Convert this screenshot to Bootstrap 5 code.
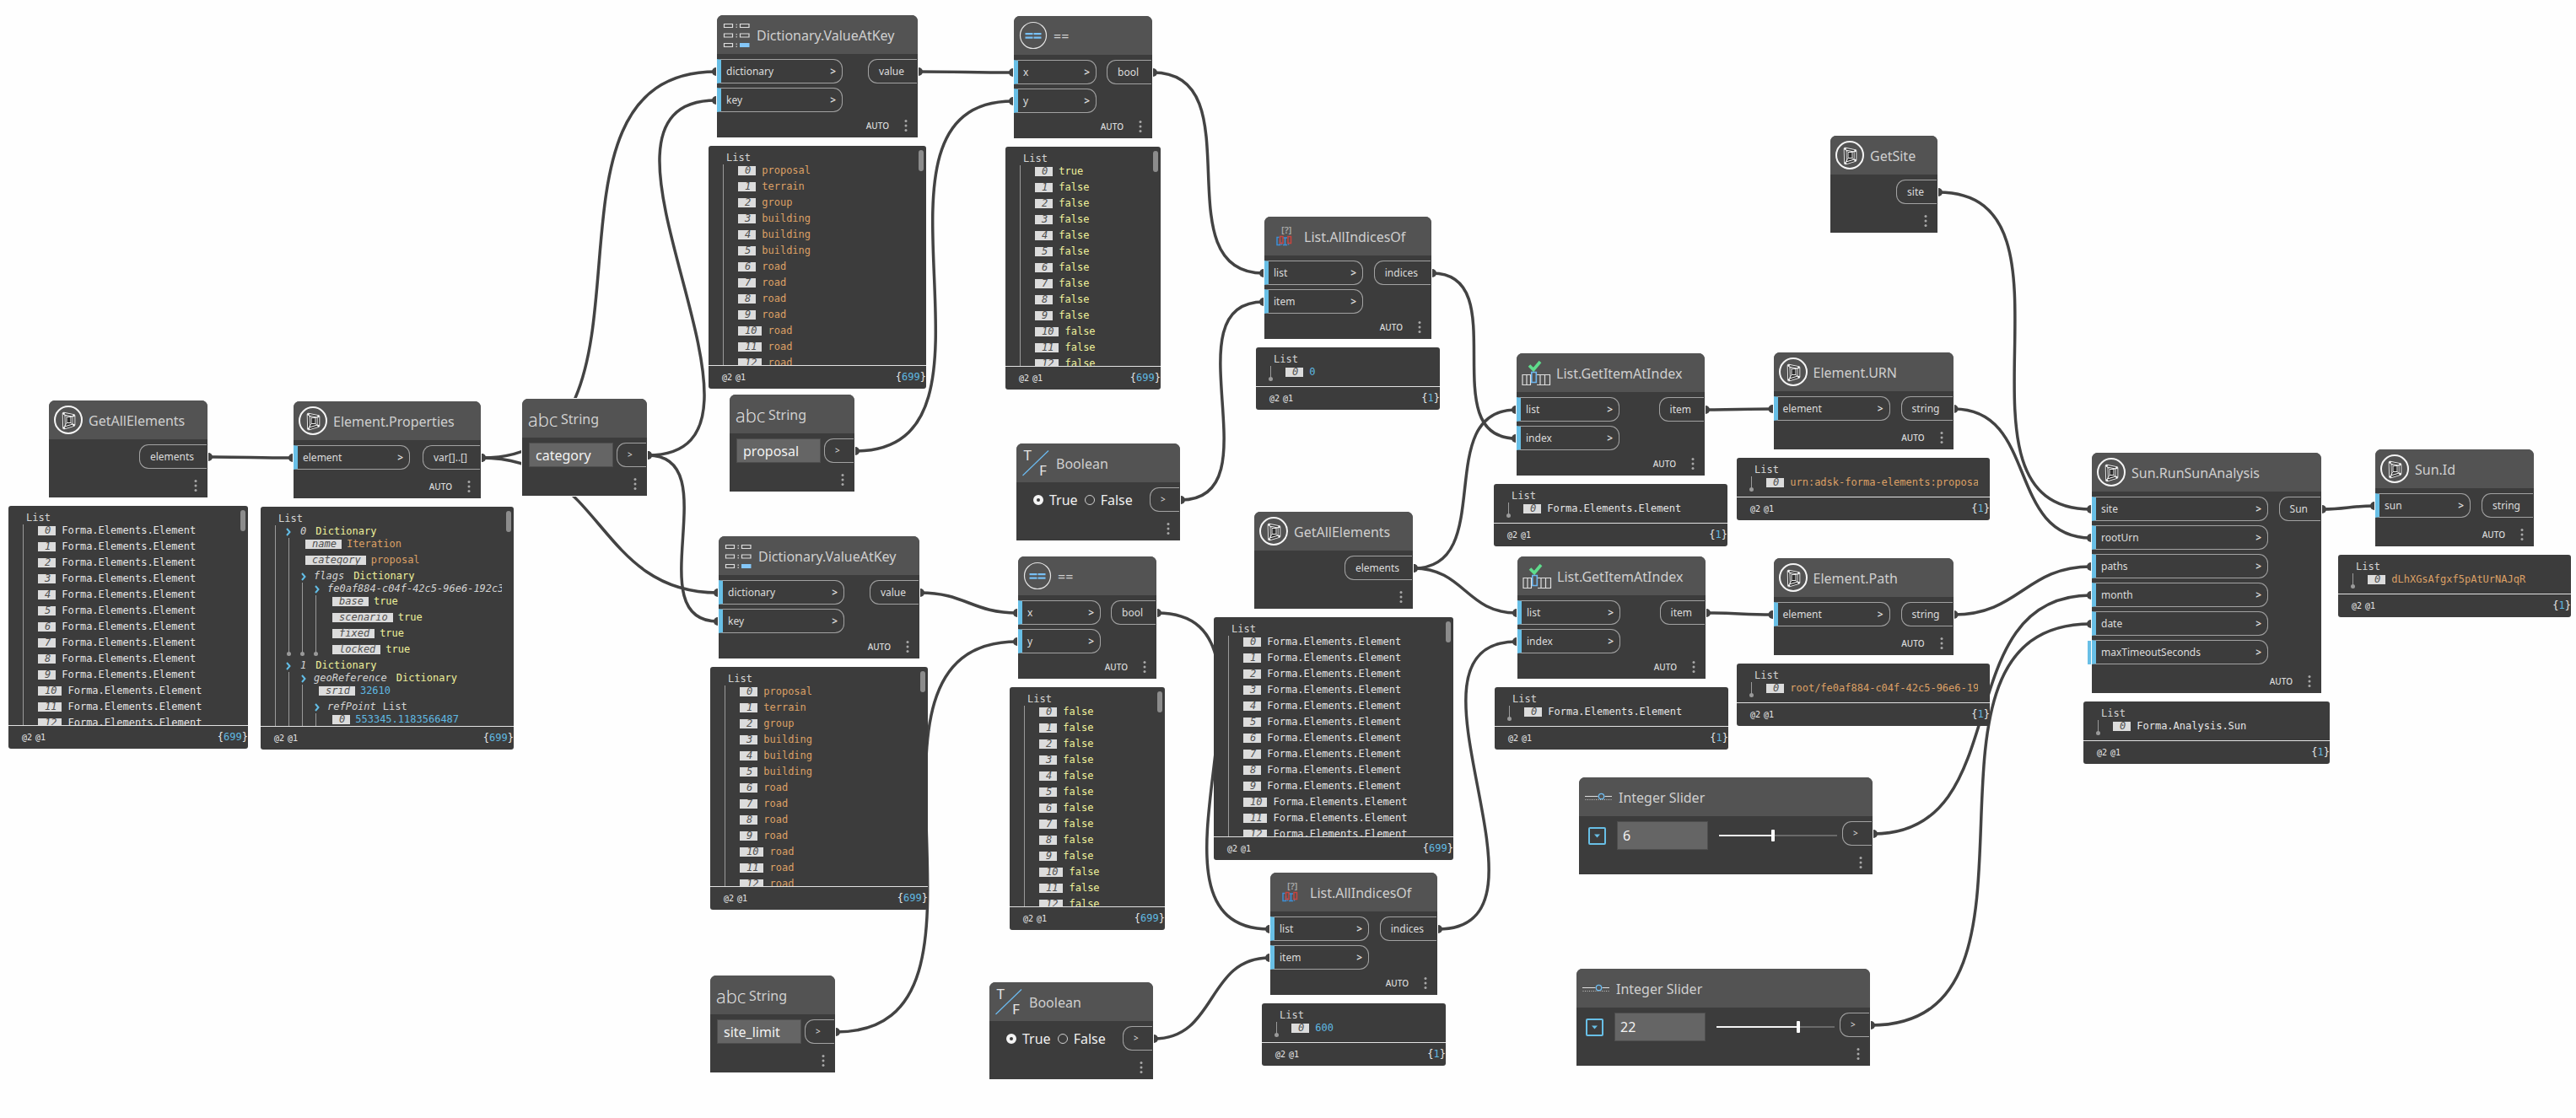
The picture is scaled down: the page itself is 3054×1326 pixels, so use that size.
<!DOCTYPE html>
<html lang="en">
<head>
<meta charset="utf-8">
<meta name="viewport" content="width=device-width, initial-scale=1">
<title>Sun analysis graph</title>
<link href="https://cdn.jsdelivr.net/npm/bootstrap@5.3.0/dist/css/bootstrap.min.css" rel="stylesheet">
<style>
  body { background: #fefefe; font-family: "Noto Sans", "Open Sans", sans-serif; }
  .graph { min-height: 100vh; overflow: hidden; }
  .wires { fill: none; stroke: #434343; stroke-width: 3.5; }
  .wires circle { fill: #434343; stroke: none; }

  /* a node and the preview bubble that hangs under it */
  .unit { position: absolute; display: flex; flex-direction: column; align-items: center; gap: 10px; }
  .node { position: relative; width: 148px; min-height: 115px; background: #3c3c3c; color: #dcdcdc;
          border-radius: 7px 7px 0 0; box-shadow: 0 0 0 1px #fefefe; display: flex; flex-direction: column; }
  .node-head { height: 46px; background: #535353; border-radius: 7px 7px 0 0; padding-top: 1px; }
  .node-head h2 { font-size: 16px; line-height: 24px; font-weight: 400; margin: 0; color: #cfcfcf; white-space: nowrap; }
  .node-head svg { width: 47px; height: 45px; flex: none; }
  .abc { width: 46px; padding-left: 7px; font: 300 22px/24px "Open Sans", "Noto Sans", sans-serif; color: #e6e6e6; }
  .ports { padding-top: 6px; }
  .stack { display: flex; flex-direction: column; gap: 5px; }
  .port { height: 29px; font-size: 12px; line-height: 27px; border: 1px solid #a2a2a2; white-space: nowrap; }
  .port-in { width: var(--in, 138px); border-left: 5px solid #68bfe6; border-radius: 0 11px 11px 0; padding: 0 7px 0 6px; }
  .port-out { border-right: 0; border-radius: 11px 0 0 11px; padding: 0 15px 0 12px; margin-right: 1px; }
  .port-bare { width: 35px; padding: 0 0 0 12px; font-size: 10px; }
  .port-in::after { content: ">"; font-weight: 600; }
  .spare::before { content: ""; position: absolute; left: -5px; width: 4px; height: 28px; background: #68bfe6; }
  .node-foot { height: 28px; padding-right: 8px; gap: 14px; font-size: 10px; font-weight: 500; }
  .kebab { border: 0; background: none; padding: 0; width: 12px; height: 18px; line-height: 0; }

  .k-list { width: 188px; }  .k-props { width: 222px; }
  .k-dict { width: 238px; --in: 149px; }  .k-eq { width: 164px; --in: 98px; }
  .k-all { width: 198px; --in: 117px; }   .k-item { width: 223px; --in: 122px; }
  .k-dict, .k-eq, .k-all, .k-item { min-height: 145px; }
  .k-elem { width: 213px; }               .k-bool { width: 194px; }
  .k-slide { width: 348px; }              .k-site { width: 127px; }
  .k-run { width: 272px; --in: 209px; min-height: 285px; }
  .k-id { width: 188px; --in: 113px; }

  .field { height: 29px; width: 100px; background: #656565; border: 1px solid #4e4e4e; color: #f2f2f2; font-size: 16px; line-height: 24px; padding: 0 7px; }
  .field-num { width: 108px; height: 34px; padding: 0 6px; }
  .pick { appearance: none; width: 12px; height: 12px; margin: 0; border: 1px solid #d0d0d0; border-radius: 50%; }
  .pick:checked { border: 4px solid #f4f4f4; }
  .choice { font-size: 16px; line-height: 24px; color: #f0f0f0; gap: 7px; }
  .slide-row { padding-left: 11px; gap: 13px; }
  .drop { width: 21px; height: 21px; border: 2px solid #68bfe6; border-radius: 2px; background: none; padding: 0; line-height: 0; }
  .track { appearance: none; width: 140px; height: 14px; margin: 0; background: linear-gradient(90deg, #f4f4f4 var(--fill), #6a6a6a var(--fill)) center / 100% 2px no-repeat; }
  .track::-webkit-slider-thumb { appearance: none; width: 4px; height: 14px; background: #fff; border-radius: 1px; }

  .preview { position: relative; width: 100%; background: #3c3c3c; color: #e6e6e6; border-radius: 3px;
             font: 12px/15px "DejaVu Sans Mono", "Liberation Mono", monospace; }
  .tree-box { height: 46px; overflow: hidden; margin-right: 14px; padding: 7px 0 0 17px; white-space: nowrap; }
  .tall .tree-box { height: 260px; }
  .tree-box p { margin: 0 0 0 4px; line-height: 15px; color: #d4d4d4; }
  .tree-box ul { list-style: none; margin: 0; padding: 0; border-left: 1px solid #9a9a9a; position: relative; }
  .leaf { padding-left: 17px; height: 15px; margin-bottom: 4px; display: flex; align-items: center; gap: 7px; }
  .leaf i { background: #dcdcdc; color: #4f4f4f; padding: 0 6px 0 8px; line-height: 11px; height: 11px; }
  .ended::after { content: ""; position: absolute; left: -3px; bottom: 0; width: 5px; height: 5px; border-radius: 50%; background: #9a9a9a; }
  .single ul { height: 18px; }
  .single ul::after { content: ""; position: absolute; left: -3px; bottom: 0; width: 5px; height: 5px; border-radius: 50%; background: #9a9a9a; }
  .branch > div { height: 15px; display: flex; align-items: center; padding-left: 12px; color: #d4d4d4; }
  .branch svg { width: 6px; height: 10px; margin-right: 11px; flex: none; }
  .branch ul { margin-left: 15px; }
  .branch .leaf { padding-left: 19px; gap: 6px; }
  .branch .branch > div { padding-left: 14px; }
  .branch .branch svg { margin-right: 9px; }
  .kind { color: #eef09a; margin-left: 11px; }
  .str { color: #dca065; }  .flag { color: #eef09a; }  .num { color: #5fb9e2; }
  .thumb { position: absolute; right: 3px; top: 5px; width: 6px; height: 25px; border-radius: 3px; background: #8c8c8c; }
  .levels { border-top: 1px solid #e2e2e2; height: 28px; padding: 0 0 0 16px; display: flex; justify-content: space-between; align-items: center; }
  .levels small { font-size: 10px; display: flex; gap: 4px; }

  /* where each unit lies on the canvas */
  #u-all1 { left: 10px; top: 475px; width: 284px; }
  #u-props { left: 309px; top: 476px; width: 300px; }
  #u-category { left: 619px; top: 473px; }
  #u-dict1 { left: 840px; top: 18px; width: 258px; }
  #u-proposal { left: 865px; top: 468px; }
  #u-dict2 { left: 842px; top: 636px; width: 258px; }
  #u-limit { left: 842px; top: 1157px; }
  #u-eq1 { left: 1192px; top: 19px; width: 184px; }
  #u-bool1 { left: 1205px; top: 526px; }
  #u-eq2 { left: 1197px; top: 660px; width: 184px; }
  #u-bool2 { left: 1173px; top: 1165px; }
  #u-ind1 { left: 1489px; top: 257px; width: 218px; }
  #u-all2 { left: 1439px; top: 607px; width: 284px; }
  #u-ind2 { left: 1496px; top: 1035px; width: 218px; }
  #u-item1 { left: 1771px; top: 419px; width: 277px; }
  #u-item2 { left: 1772px; top: 660px; width: 277px; }
  #u-slide1 { left: 1872px; top: 922px; }
  #u-slide2 { left: 1869px; top: 1149px; }
  #u-urn { left: 2059px; top: 418px; width: 300px; }
  #u-path { left: 2059px; top: 662px; width: 300px; }
  #u-site { left: 2170px; top: 161px; }
  #u-run { left: 2470px; top: 537px; width: 292px; }
  #u-id { left: 2772px; top: 533px; width: 276px; }
</style>
<script src="https://cdn.jsdelivr.net/npm/bootstrap@5.3.0/dist/js/bootstrap.bundle.min.js"></script>
</head>
<body>
<svg class="d-none" aria-hidden="true">
  <symbol id="i-forma" viewBox="0 0 47 45">
    <circle cx="23" cy="22" r="16" fill="none" stroke="#f4f4f4" stroke-width="2"/>
    <path d="M17.500 14.500 29.500 17v11L18 31.500z" fill="#2e2e2e" stroke="#f0f0f0" stroke-width="3.600" stroke-linejoin="round"/>
    <path d="M17.500 14.500 29.500 17v11L18 31.500z" fill="none" stroke="#333" stroke-width="1.700"/>
    <path d="M21 18.500h5v7h-5zM21 18.500l-3.500-3.500M26 18.500l3-1.500M21 25.500l-3 5M26 25.500l3 2.500" fill="none" stroke="#e8e8e8" stroke-width="1"/>
    <g fill="#fff"><circle cx="17.500" cy="14.500" r="1.200"/><circle cx="29.500" cy="17" r="1.200"/><circle cx="29.500" cy="28" r="1.200"/><circle cx="18" cy="31.500" r="1.200"/></g>
  </symbol>
  <symbol id="i-dict" viewBox="0 0 47 45">
    <g fill="none" stroke="#dedede" stroke-width="1.200"><path d="M8.500 9.500h10v4h-10zM27.500 9.500h10.500v4H27.500zM8.500 21h10v4h-10zM27.500 21h10.500v4H27.500zM8.500 32.500h10v4h-10z"/></g>
    <path d="M27 32h11.500v5H27z" fill="#84c6f7"/>
    <path d="M22.500 9.500h1.500v1.500h-1.500zm0 3h1.500v1.500h-1.500zm0 8.500h1.500v1.500h-1.500zm0 3h1.500v1.500h-1.500zm0 8.500h1.500v1.500h-1.500zm0 3h1.500v1.500h-1.500z" fill="#b8b8b8"/>
  </symbol>
  <symbol id="i-eq" viewBox="0 0 47 45">
    <circle cx="23" cy="22" r="15.500" fill="none" stroke="#e4e4e4" stroke-width="1.200"/>
    <path d="M13.500 19h9v2.200h-9zm10 0h9v2.200h-9zm-10 4.500h9v2.200h-9zm10 0h9v2.200h-9z" fill="#78c0f5"/>
  </symbol>
  <symbol id="i-ind" viewBox="0 0 47 45">
    <text x="20" y="18.500" font-size="11" font-weight="600" fill="#a8a8a8">[?]</text>
    <g fill="none" stroke-width="1.500"><path d="M17.500 23.500h-2.500v9h3.500v-6M22 24h5M24.500 24v8M22 32.500h5M20.500 32.500v-3M28.500 32.500v-3" stroke="#3d8fd6"/><path d="M18.500 22.500h3.500v8h-3.500zM28 22.500h3.500v8H28z" stroke="#c8443f"/></g>
  </symbol>
  <symbol id="i-item" viewBox="0 0 47 45">
    <path d="M15 13.500l5 5 8-9.500" fill="none" stroke="#5fdc8c" stroke-width="3.600"/>
    <path d="M17 24.500H7v12h10M12 24.500v12M16.500 24.500v12M24 24.500h15.500v12H24M28 24.500v12M33.500 24.500v12" fill="none" stroke="#dedede" stroke-width="1.200"/>
    <path d="M17.800 21.500h5.500v12h-5.500z" fill="#535353" stroke="#6db5ee" stroke-width="1.600"/>
  </symbol>
  <symbol id="i-tf" viewBox="0 0 47 45">
    <g font-size="17" fill="#e4e4e4"><text x="8.500" y="19">T</text><text x="27" y="36.500">F</text></g>
    <path d="M7.500 37 38 7.500" stroke="#6cbcf2" stroke-width="1.200"/>
  </symbol>
  <symbol id="i-slide" viewBox="0 0 47 45">
    <path d="M7 21.500h15.500M30.500 21.500H39" stroke="#dedede"/>
    <path d="M7.500 25.500h31" stroke="#c6c6c6" stroke-dasharray="1 1.500"/>
    <circle cx="26.500" cy="21.500" r="3.200" fill="#535353" stroke="#6cbcf2" stroke-width="1.300"/>
  </symbol>
  <symbol id="i-more" viewBox="0 0 12 18"><g fill="#a8a8a8"><circle cx="6" cy="3.500" r="1.500"/><circle cx="6" cy="9" r="1.500"/><circle cx="6" cy="14.500" r="1.500"/></g></symbol>
  <symbol id="i-open" viewBox="0 0 6 10"><path d="M1 1l3.500 4L1 9" fill="none" stroke="#62bde6" stroke-width="2"/></symbol>
  <symbol id="i-down" viewBox="0 0 17 17"><path d="M5 6.500h7L8.500 10.500z" fill="#68bfe6"/></symbol>
</svg>

<main class="graph position-relative w-100">
  <svg class="wires position-absolute top-0 start-0 w-100 h-100" id="wires" aria-hidden="true"></svg>

  <section class="unit" id="u-all1">
    <article class="node k-list">
      <header class="node-head d-flex align-items-center"><svg><use href="#i-forma"/></svg><h2>GetAllElements</h2></header>
      <div class="ports d-flex justify-content-end"><div class="port port-out">elements</div></div>
      <footer class="node-foot d-flex align-items-center justify-content-end mt-auto"><button class="kebab" aria-label="Node menu"><svg width="12" height="18"><use href="#i-more"/></svg></button></footer>
    </article>
    <div class="preview tall">
      <div class="tree-box"><p>List</p><ul>
        <li class="leaf"><i>0</i>Forma.Elements.Element</li><li class="leaf"><i>1</i>Forma.Elements.Element</li><li class="leaf"><i>2</i>Forma.Elements.Element</li><li class="leaf"><i>3</i>Forma.Elements.Element</li><li class="leaf"><i>4</i>Forma.Elements.Element</li><li class="leaf"><i>5</i>Forma.Elements.Element</li><li class="leaf"><i>6</i>Forma.Elements.Element</li><li class="leaf"><i>7</i>Forma.Elements.Element</li><li class="leaf"><i>8</i>Forma.Elements.Element</li><li class="leaf"><i>9</i>Forma.Elements.Element</li><li class="leaf"><i>10</i>Forma.Elements.Element</li><li class="leaf"><i>11</i>Forma.Elements.Element</li><li class="leaf"><i>12</i>Forma.Elements.Element</li>
      </ul></div>
      <span class="thumb"></span>
      <div class="levels"><small><span>@2</span><span>@1</span></small><span>{<span class="num">699</span>}</span></div>
    </div>
  </section>

  <section class="unit" id="u-props">
    <article class="node k-props">
      <header class="node-head d-flex align-items-center"><svg><use href="#i-forma"/></svg><h2>Element.Properties</h2></header>
      <div class="ports d-flex justify-content-between"><div class="stack"><div class="port port-in d-flex justify-content-between">element</div></div><div class="port port-out">var[]..[]</div></div>
      <footer class="node-foot d-flex align-items-center justify-content-end mt-auto">AUTO<button class="kebab" aria-label="Node menu"><svg width="12" height="18"><use href="#i-more"/></svg></button></footer>
    </article>
    <div class="preview tall">
      <div class="tree-box"><p>List</p><ul>
        <li class="branch"><div><svg><use href="#i-open"/></svg><em>0</em><span class="kind">Dictionary</span></div>
          <ul class="ended">
            <li class="leaf"><i>name</i><span class="str">Iteration</span></li>
            <li class="leaf"><i>category</i><span class="str">proposal</span></li>
            <li class="branch"><div><svg><use href="#i-open"/></svg><em>flags</em><span class="kind">Dictionary</span></div>
              <ul class="ended">
                <li class="branch"><div><svg><use href="#i-open"/></svg><em>fe0af884-c04f-42c5-96e6-192c3</em></div>
                  <ul class="ended">
                    <li class="leaf"><i>base</i><span class="flag">true</span></li>
                    <li class="leaf"><i>scenario</i><span class="flag">true</span></li>
                    <li class="leaf"><i>fixed</i><span class="flag">true</span></li>
                    <li class="leaf"><i>locked</i><span class="flag">true</span></li>
                  </ul></li>
              </ul></li>
          </ul></li>
        <li class="branch"><div><svg><use href="#i-open"/></svg><em>1</em><span class="kind">Dictionary</span></div>
          <ul>
            <li class="branch"><div><svg><use href="#i-open"/></svg><em>geoReference</em><span class="kind">Dictionary</span></div>
              <ul>
                <li class="leaf"><i>srid</i><span class="num">32610</span></li>
                <li class="branch"><div><svg><use href="#i-open"/></svg><em>refPoint</em><span class="ms-2">List</span></div>
                  <ul><li class="leaf"><i>0</i><span class="num">553345.1183566487</span></li></ul></li>
              </ul></li>
          </ul></li>
      </ul></div>
      <span class="thumb"></span>
      <div class="levels"><small><span>@2</span><span>@1</span></small><span>{<span class="num">699</span>}</span></div>
    </div>
  </section>

  <section class="unit" id="u-category">
    <article class="node">
      <header class="node-head d-flex align-items-center"><span class="abc">abc</span><h2>String</h2></header>
      <div class="ports d-flex justify-content-between ps-1"><input class="field ms-1" aria-label="String" value="category"><div class="port port-out port-bare">&gt;</div></div>
      <footer class="node-foot d-flex align-items-center justify-content-end mt-auto"><button class="kebab" aria-label="Node menu"><svg width="12" height="18"><use href="#i-more"/></svg></button></footer>
    </article>
  </section>

  <section class="unit" id="u-dict1">
    <article class="node k-dict">
      <header class="node-head d-flex align-items-center"><svg><use href="#i-dict"/></svg><h2>Dictionary.ValueAtKey</h2></header>
      <div class="ports d-flex justify-content-between"><div class="stack"><div class="port port-in d-flex justify-content-between">dictionary</div><div class="port port-in d-flex justify-content-between">key</div></div><div class="port port-out">value</div></div>
      <footer class="node-foot d-flex align-items-center justify-content-end mt-auto">AUTO<button class="kebab" aria-label="Node menu"><svg width="12" height="18"><use href="#i-more"/></svg></button></footer>
    </article>
    <div class="preview tall">
      <div class="tree-box"><p>List</p><ul class="str">
        <li class="leaf"><i>0</i>proposal</li><li class="leaf"><i>1</i>terrain</li><li class="leaf"><i>2</i>group</li><li class="leaf"><i>3</i>building</li><li class="leaf"><i>4</i>building</li><li class="leaf"><i>5</i>building</li><li class="leaf"><i>6</i>road</li><li class="leaf"><i>7</i>road</li><li class="leaf"><i>8</i>road</li><li class="leaf"><i>9</i>road</li><li class="leaf"><i>10</i>road</li><li class="leaf"><i>11</i>road</li><li class="leaf"><i>12</i>road</li>
      </ul></div>
      <span class="thumb"></span>
      <div class="levels"><small><span>@2</span><span>@1</span></small><span>{<span class="num">699</span>}</span></div>
    </div>
  </section>

  <section class="unit" id="u-proposal">
    <article class="node">
      <header class="node-head d-flex align-items-center"><span class="abc">abc</span><h2>String</h2></header>
      <div class="ports d-flex justify-content-between ps-1"><input class="field ms-1" aria-label="String" value="proposal"><div class="port port-out port-bare">&gt;</div></div>
      <footer class="node-foot d-flex align-items-center justify-content-end mt-auto"><button class="kebab" aria-label="Node menu"><svg width="12" height="18"><use href="#i-more"/></svg></button></footer>
    </article>
  </section>

  <section class="unit" id="u-dict2">
    <article class="node k-dict">
      <header class="node-head d-flex align-items-center"><svg><use href="#i-dict"/></svg><h2>Dictionary.ValueAtKey</h2></header>
      <div class="ports d-flex justify-content-between"><div class="stack"><div class="port port-in d-flex justify-content-between">dictionary</div><div class="port port-in d-flex justify-content-between">key</div></div><div class="port port-out">value</div></div>
      <footer class="node-foot d-flex align-items-center justify-content-end mt-auto">AUTO<button class="kebab" aria-label="Node menu"><svg width="12" height="18"><use href="#i-more"/></svg></button></footer>
    </article>
    <div class="preview tall">
      <div class="tree-box"><p>List</p><ul class="str">
        <li class="leaf"><i>0</i>proposal</li><li class="leaf"><i>1</i>terrain</li><li class="leaf"><i>2</i>group</li><li class="leaf"><i>3</i>building</li><li class="leaf"><i>4</i>building</li><li class="leaf"><i>5</i>building</li><li class="leaf"><i>6</i>road</li><li class="leaf"><i>7</i>road</li><li class="leaf"><i>8</i>road</li><li class="leaf"><i>9</i>road</li><li class="leaf"><i>10</i>road</li><li class="leaf"><i>11</i>road</li><li class="leaf"><i>12</i>road</li>
      </ul></div>
      <span class="thumb"></span>
      <div class="levels"><small><span>@2</span><span>@1</span></small><span>{<span class="num">699</span>}</span></div>
    </div>
  </section>

  <section class="unit" id="u-limit">
    <article class="node">
      <header class="node-head d-flex align-items-center"><span class="abc">abc</span><h2>String</h2></header>
      <div class="ports d-flex justify-content-between ps-1"><input class="field ms-1" aria-label="String" value="site_limit"><div class="port port-out port-bare">&gt;</div></div>
      <footer class="node-foot d-flex align-items-center justify-content-end mt-auto"><button class="kebab" aria-label="Node menu"><svg width="12" height="18"><use href="#i-more"/></svg></button></footer>
    </article>
  </section>

  <section class="unit" id="u-eq1">
    <article class="node k-eq">
      <header class="node-head d-flex align-items-center"><svg><use href="#i-eq"/></svg><h2>==</h2></header>
      <div class="ports d-flex justify-content-between"><div class="stack"><div class="port port-in d-flex justify-content-between">x</div><div class="port port-in d-flex justify-content-between">y</div></div><div class="port port-out">bool</div></div>
      <footer class="node-foot d-flex align-items-center justify-content-end mt-auto">AUTO<button class="kebab" aria-label="Node menu"><svg width="12" height="18"><use href="#i-more"/></svg></button></footer>
    </article>
    <div class="preview tall">
      <div class="tree-box"><p>List</p><ul class="flag">
        <li class="leaf"><i>0</i>true</li><li class="leaf"><i>1</i>false</li><li class="leaf"><i>2</i>false</li><li class="leaf"><i>3</i>false</li><li class="leaf"><i>4</i>false</li><li class="leaf"><i>5</i>false</li><li class="leaf"><i>6</i>false</li><li class="leaf"><i>7</i>false</li><li class="leaf"><i>8</i>false</li><li class="leaf"><i>9</i>false</li><li class="leaf"><i>10</i>false</li><li class="leaf"><i>11</i>false</li><li class="leaf"><i>12</i>false</li>
      </ul></div>
      <span class="thumb"></span>
      <div class="levels"><small><span>@2</span><span>@1</span></small><span>{<span class="num">699</span>}</span></div>
    </div>
  </section>

  <section class="unit" id="u-bool1">
    <article class="node k-bool">
      <header class="node-head d-flex align-items-center"><svg><use href="#i-tf"/></svg><h2>Boolean</h2></header>
      <div class="ports d-flex justify-content-between">
        <div class="d-flex align-items-center gap-2 ps-3 ms-1">
          <label class="choice d-flex align-items-center"><input class="pick" type="radio" name="b1" checked>True</label>
          <label class="choice d-flex align-items-center"><input class="pick" type="radio" name="b1">False</label>
        </div>
        <div class="port port-out port-bare">&gt;</div>
      </div>
      <footer class="node-foot d-flex align-items-center justify-content-end mt-auto"><button class="kebab" aria-label="Node menu"><svg width="12" height="18"><use href="#i-more"/></svg></button></footer>
    </article>
  </section>

  <section class="unit" id="u-eq2">
    <article class="node k-eq">
      <header class="node-head d-flex align-items-center"><svg><use href="#i-eq"/></svg><h2>==</h2></header>
      <div class="ports d-flex justify-content-between"><div class="stack"><div class="port port-in d-flex justify-content-between">x</div><div class="port port-in d-flex justify-content-between">y</div></div><div class="port port-out">bool</div></div>
      <footer class="node-foot d-flex align-items-center justify-content-end mt-auto">AUTO<button class="kebab" aria-label="Node menu"><svg width="12" height="18"><use href="#i-more"/></svg></button></footer>
    </article>
    <div class="preview tall">
      <div class="tree-box"><p>List</p><ul class="flag">
        <li class="leaf"><i>0</i>false</li><li class="leaf"><i>1</i>false</li><li class="leaf"><i>2</i>false</li><li class="leaf"><i>3</i>false</li><li class="leaf"><i>4</i>false</li><li class="leaf"><i>5</i>false</li><li class="leaf"><i>6</i>false</li><li class="leaf"><i>7</i>false</li><li class="leaf"><i>8</i>false</li><li class="leaf"><i>9</i>false</li><li class="leaf"><i>10</i>false</li><li class="leaf"><i>11</i>false</li><li class="leaf"><i>12</i>false</li>
      </ul></div>
      <span class="thumb"></span>
      <div class="levels"><small><span>@2</span><span>@1</span></small><span>{<span class="num">699</span>}</span></div>
    </div>
  </section>

  <section class="unit" id="u-bool2">
    <article class="node k-bool">
      <header class="node-head d-flex align-items-center"><svg><use href="#i-tf"/></svg><h2>Boolean</h2></header>
      <div class="ports d-flex justify-content-between">
        <div class="d-flex align-items-center gap-2 ps-3 ms-1">
          <label class="choice d-flex align-items-center"><input class="pick" type="radio" name="b2" checked>True</label>
          <label class="choice d-flex align-items-center"><input class="pick" type="radio" name="b2">False</label>
        </div>
        <div class="port port-out port-bare">&gt;</div>
      </div>
      <footer class="node-foot d-flex align-items-center justify-content-end mt-auto"><button class="kebab" aria-label="Node menu"><svg width="12" height="18"><use href="#i-more"/></svg></button></footer>
    </article>
  </section>

  <section class="unit" id="u-ind1">
    <article class="node k-all">
      <header class="node-head d-flex align-items-center"><svg><use href="#i-ind"/></svg><h2>List.AllIndicesOf</h2></header>
      <div class="ports d-flex justify-content-between"><div class="stack"><div class="port port-in d-flex justify-content-between">list</div><div class="port port-in d-flex justify-content-between">item</div></div><div class="port port-out">indices</div></div>
      <footer class="node-foot d-flex align-items-center justify-content-end mt-auto">AUTO<button class="kebab" aria-label="Node menu"><svg width="12" height="18"><use href="#i-more"/></svg></button></footer>
    </article>
    <div class="preview single">
      <div class="tree-box"><p>List</p><ul><li class="leaf"><i>0</i><span class="num">0</span></li></ul></div>
      <div class="levels"><small><span>@2</span><span>@1</span></small><span>{<span class="num">1</span>}</span></div>
    </div>
  </section>

  <section class="unit" id="u-all2">
    <article class="node k-list">
      <header class="node-head d-flex align-items-center"><svg><use href="#i-forma"/></svg><h2>GetAllElements</h2></header>
      <div class="ports d-flex justify-content-end"><div class="port port-out">elements</div></div>
      <footer class="node-foot d-flex align-items-center justify-content-end mt-auto"><button class="kebab" aria-label="Node menu"><svg width="12" height="18"><use href="#i-more"/></svg></button></footer>
    </article>
    <div class="preview tall">
      <div class="tree-box"><p>List</p><ul>
        <li class="leaf"><i>0</i>Forma.Elements.Element</li><li class="leaf"><i>1</i>Forma.Elements.Element</li><li class="leaf"><i>2</i>Forma.Elements.Element</li><li class="leaf"><i>3</i>Forma.Elements.Element</li><li class="leaf"><i>4</i>Forma.Elements.Element</li><li class="leaf"><i>5</i>Forma.Elements.Element</li><li class="leaf"><i>6</i>Forma.Elements.Element</li><li class="leaf"><i>7</i>Forma.Elements.Element</li><li class="leaf"><i>8</i>Forma.Elements.Element</li><li class="leaf"><i>9</i>Forma.Elements.Element</li><li class="leaf"><i>10</i>Forma.Elements.Element</li><li class="leaf"><i>11</i>Forma.Elements.Element</li><li class="leaf"><i>12</i>Forma.Elements.Element</li>
      </ul></div>
      <span class="thumb"></span>
      <div class="levels"><small><span>@2</span><span>@1</span></small><span>{<span class="num">699</span>}</span></div>
    </div>
  </section>

  <section class="unit" id="u-ind2">
    <article class="node k-all">
      <header class="node-head d-flex align-items-center"><svg><use href="#i-ind"/></svg><h2>List.AllIndicesOf</h2></header>
      <div class="ports d-flex justify-content-between"><div class="stack"><div class="port port-in d-flex justify-content-between">list</div><div class="port port-in d-flex justify-content-between">item</div></div><div class="port port-out">indices</div></div>
      <footer class="node-foot d-flex align-items-center justify-content-end mt-auto">AUTO<button class="kebab" aria-label="Node menu"><svg width="12" height="18"><use href="#i-more"/></svg></button></footer>
    </article>
    <div class="preview single">
      <div class="tree-box"><p>List</p><ul><li class="leaf"><i>0</i><span class="num">600</span></li></ul></div>
      <div class="levels"><small><span>@2</span><span>@1</span></small><span>{<span class="num">1</span>}</span></div>
    </div>
  </section>

  <section class="unit" id="u-item1">
    <article class="node k-item">
      <header class="node-head d-flex align-items-center"><svg><use href="#i-item"/></svg><h2>List.GetItemAtIndex</h2></header>
      <div class="ports d-flex justify-content-between"><div class="stack"><div class="port port-in d-flex justify-content-between">list</div><div class="port port-in d-flex justify-content-between">index</div></div><div class="port port-out">item</div></div>
      <footer class="node-foot d-flex align-items-center justify-content-end mt-auto">AUTO<button class="kebab" aria-label="Node menu"><svg width="12" height="18"><use href="#i-more"/></svg></button></footer>
    </article>
    <div class="preview single">
      <div class="tree-box"><p>List</p><ul><li class="leaf"><i>0</i>Forma.Elements.Element</li></ul></div>
      <div class="levels"><small><span>@2</span><span>@1</span></small><span>{<span class="num">1</span>}</span></div>
    </div>
  </section>

  <section class="unit" id="u-item2">
    <article class="node k-item">
      <header class="node-head d-flex align-items-center"><svg><use href="#i-item"/></svg><h2>List.GetItemAtIndex</h2></header>
      <div class="ports d-flex justify-content-between"><div class="stack"><div class="port port-in d-flex justify-content-between">list</div><div class="port port-in d-flex justify-content-between">index</div></div><div class="port port-out">item</div></div>
      <footer class="node-foot d-flex align-items-center justify-content-end mt-auto">AUTO<button class="kebab" aria-label="Node menu"><svg width="12" height="18"><use href="#i-more"/></svg></button></footer>
    </article>
    <div class="preview single">
      <div class="tree-box"><p>List</p><ul><li class="leaf"><i>0</i>Forma.Elements.Element</li></ul></div>
      <div class="levels"><small><span>@2</span><span>@1</span></small><span>{<span class="num">1</span>}</span></div>
    </div>
  </section>

  <section class="unit" id="u-slide1">
    <article class="node k-slide">
      <header class="node-head d-flex align-items-center"><svg><use href="#i-slide"/></svg><h2>Integer Slider</h2></header>
      <div class="ports d-flex justify-content-between">
        <div class="slide-row d-flex align-items-center">
          <button class="drop" aria-label="Range"><svg width="17" height="17"><use href="#i-down"/></svg></button>
          <input class="field field-num" aria-label="Value" value="6">
          <input class="track" type="range" aria-label="Month" min="1" max="12" value="6" style="--fill: 46%">
        </div>
        <div class="port port-out port-bare">&gt;</div>
      </div>
      <footer class="node-foot d-flex align-items-center justify-content-end mt-auto"><button class="kebab" aria-label="Node menu"><svg width="12" height="18"><use href="#i-more"/></svg></button></footer>
    </article>
  </section>

  <section class="unit" id="u-slide2">
    <article class="node k-slide">
      <header class="node-head d-flex align-items-center"><svg><use href="#i-slide"/></svg><h2>Integer Slider</h2></header>
      <div class="ports d-flex justify-content-between">
        <div class="slide-row d-flex align-items-center">
          <button class="drop" aria-label="Range"><svg width="17" height="17"><use href="#i-down"/></svg></button>
          <input class="field field-num" aria-label="Value" value="22">
          <input class="track" type="range" aria-label="Date" min="1" max="31" value="22" style="--fill: 70%">
        </div>
        <div class="port port-out port-bare">&gt;</div>
      </div>
      <footer class="node-foot d-flex align-items-center justify-content-end mt-auto"><button class="kebab" aria-label="Node menu"><svg width="12" height="18"><use href="#i-more"/></svg></button></footer>
    </article>
  </section>

  <section class="unit" id="u-urn">
    <article class="node k-elem">
      <header class="node-head d-flex align-items-center"><svg><use href="#i-forma"/></svg><h2>Element.URN</h2></header>
      <div class="ports d-flex justify-content-between"><div class="stack"><div class="port port-in d-flex justify-content-between">element</div></div><div class="port port-out">string</div></div>
      <footer class="node-foot d-flex align-items-center justify-content-end mt-auto">AUTO<button class="kebab" aria-label="Node menu"><svg width="12" height="18"><use href="#i-more"/></svg></button></footer>
    </article>
    <div class="preview single">
      <div class="tree-box"><p>List</p><ul><li class="leaf"><i>0</i><span class="str">urn:adsk-forma-elements:proposa</span></li></ul></div>
      <div class="levels"><small><span>@2</span><span>@1</span></small><span>{<span class="num">1</span>}</span></div>
    </div>
  </section>

  <section class="unit" id="u-path">
    <article class="node k-elem">
      <header class="node-head d-flex align-items-center"><svg><use href="#i-forma"/></svg><h2>Element.Path</h2></header>
      <div class="ports d-flex justify-content-between"><div class="stack"><div class="port port-in d-flex justify-content-between">element</div></div><div class="port port-out">string</div></div>
      <footer class="node-foot d-flex align-items-center justify-content-end mt-auto">AUTO<button class="kebab" aria-label="Node menu"><svg width="12" height="18"><use href="#i-more"/></svg></button></footer>
    </article>
    <div class="preview single">
      <div class="tree-box"><p>List</p><ul><li class="leaf"><i>0</i><span class="str">root/fe0af884-c04f-42c5-96e6-19</span></li></ul></div>
      <div class="levels"><small><span>@2</span><span>@1</span></small><span>{<span class="num">1</span>}</span></div>
    </div>
  </section>

  <section class="unit" id="u-site">
    <article class="node k-site">
      <header class="node-head d-flex align-items-center"><svg><use href="#i-forma"/></svg><h2>GetSite</h2></header>
      <div class="ports d-flex justify-content-end"><div class="port port-out">site</div></div>
      <footer class="node-foot d-flex align-items-center justify-content-end mt-auto"><button class="kebab" aria-label="Node menu"><svg width="12" height="18"><use href="#i-more"/></svg></button></footer>
    </article>
  </section>

  <section class="unit" id="u-run">
    <article class="node k-run">
      <header class="node-head d-flex align-items-center"><svg><use href="#i-forma"/></svg><h2>Sun.RunSunAnalysis</h2></header>
      <div class="ports d-flex justify-content-between">
        <div class="stack">
          <div class="port port-in d-flex justify-content-between">site</div>
          <div class="port port-in d-flex justify-content-between">rootUrn</div>
          <div class="port port-in d-flex justify-content-between">paths</div>
          <div class="port port-in d-flex justify-content-between">month</div>
          <div class="port port-in d-flex justify-content-between">date</div>
          <div class="port port-in spare d-flex justify-content-between">maxTimeoutSeconds</div>
        </div>
        <div class="port port-out">Sun</div>
      </div>
      <footer class="node-foot d-flex align-items-center justify-content-end mt-auto">AUTO<button class="kebab" aria-label="Node menu"><svg width="12" height="18"><use href="#i-more"/></svg></button></footer>
    </article>
    <div class="preview single">
      <div class="tree-box"><p>List</p><ul><li class="leaf"><i>0</i>Forma.Analysis.Sun</li></ul></div>
      <div class="levels"><small><span>@2</span><span>@1</span></small><span>{<span class="num">1</span>}</span></div>
    </div>
  </section>

  <section class="unit" id="u-id">
    <article class="node k-id">
      <header class="node-head d-flex align-items-center"><svg><use href="#i-forma"/></svg><h2>Sun.Id</h2></header>
      <div class="ports d-flex justify-content-between"><div class="stack"><div class="port port-in d-flex justify-content-between">sun</div></div><div class="port port-out">string</div></div>
      <footer class="node-foot d-flex align-items-center justify-content-end mt-auto">AUTO<button class="kebab" aria-label="Node menu"><svg width="12" height="18"><use href="#i-more"/></svg></button></footer>
    </article>
    <div class="preview single">
      <div class="tree-box"><p>List</p><ul><li class="leaf"><i>0</i><span class="str">dLhXGsAfgxf5pAtUrNAJqR</span></li></ul></div>
      <div class="levels"><small><span>@2</span><span>@1</span></small><span>{<span class="num">1</span>}</span></div>
    </div>
  </section>
</main>

<script>
  // Each wire: source node, target node, index of the target's input port.
  const wires = [
    ["all1", "props", 0], ["props", "dict1", 0], ["props", "dict2", 0],
    ["category", "dict1", 1], ["category", "dict2", 1],
    ["dict1", "eq1", 0], ["proposal", "eq1", 1], ["eq1", "ind1", 0], ["bool1", "ind1", 1],
    ["dict2", "eq2", 0], ["limit", "eq2", 1], ["eq2", "ind2", 0], ["bool2", "ind2", 1],
    ["ind1", "item1", 1], ["all2", "item1", 0], ["all2", "item2", 0], ["ind2", "item2", 1],
    ["item1", "urn", 0], ["item2", "path", 0],
    ["site", "run", 0], ["urn", "run", 1], ["path", "run", 2],
    ["slide1", "run", 3], ["slide2", "run", 4], ["run", "id", 0]
  ];
  const layer = document.getElementById("wires");
  function drawWires() {
    const origin = layer.getBoundingClientRect();
    let out = "";
    for (const [from, to, n] of wires) {
      const a = document.querySelector(`#u-${from} .port-out`).getBoundingClientRect();
      const b = document.querySelectorAll(`#u-${to} .port-in`)[n].getBoundingClientRect();
      const x1 = a.right + 2 - origin.left, y1 = a.top + 15 - origin.top;
      const x2 = b.left - 1 - origin.left, y2 = b.top + 15 - origin.top;
      const reach = 0.45 * Math.hypot(x2 - x1, y2 - y1);
      out += `<path d="M${x1} ${y1}C${x1 + reach} ${y1} ${x2 - reach} ${y2} ${x2} ${y2}"/>`
           + `<circle cx="${x1}" cy="${y1}" r="5"/><circle cx="${x2}" cy="${y2}" r="5"/>`;
    }
    layer.innerHTML = out;
  }
  drawWires();
  addEventListener("resize", drawWires);
</script>
</body>
</html>
